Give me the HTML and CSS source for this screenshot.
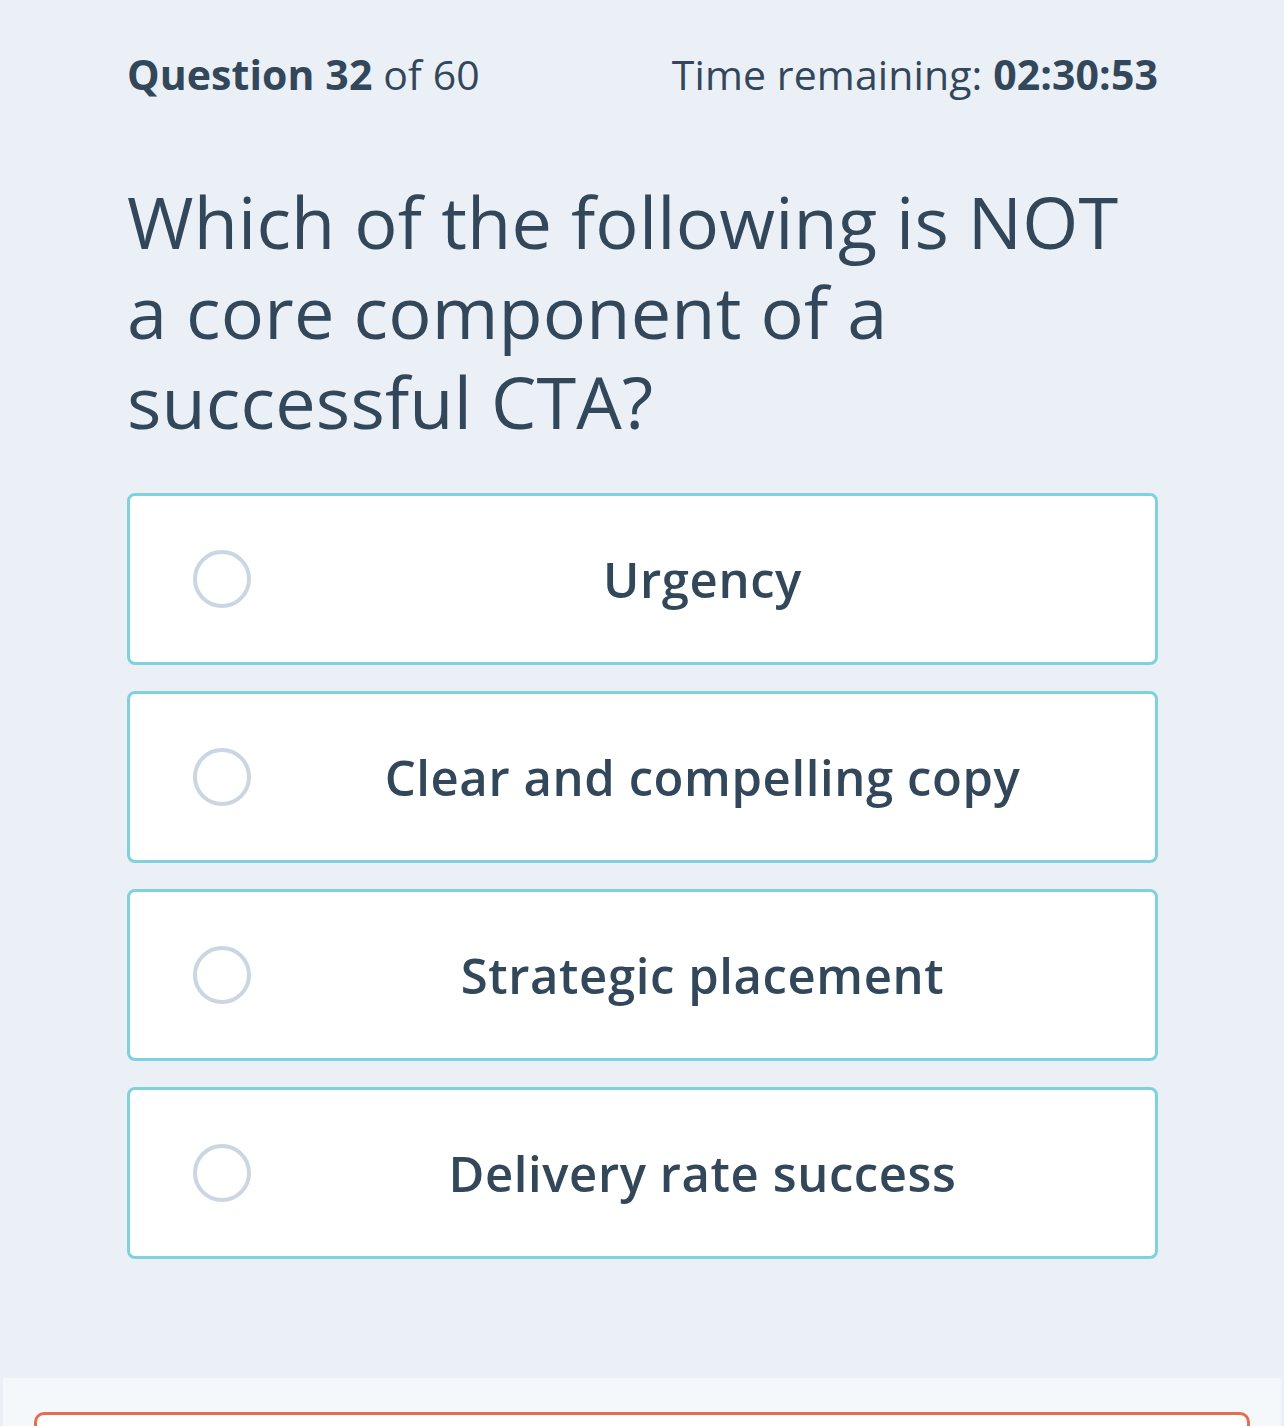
FILE: index.html
```html
<!DOCTYPE html>
<html lang="en">
<head>
<meta charset="utf-8">
<title>Quiz</title>
<link rel="stylesheet" href="styles.css">
</head>
<body>
<main class="quiz">
  <header class="quiz-header">
    <div class="progress"><strong>Question 32</strong> of 60</div>
    <div class="timer">Time remaining: <strong>02:30:53</strong></div>
  </header>
  <h1 class="question">Which of the following is NOT a core component of a successful CTA?</h1>
  <ul class="options">
    <li class="option"><span class="radio"></span><span class="label">Urgency</span></li>
    <li class="option"><span class="radio"></span><span class="label">Clear and compelling copy</span></li>
    <li class="option"><span class="radio"></span><span class="label">Strategic placement</span></li>
    <li class="option"><span class="radio"></span><span class="label">Delivery rate success</span></li>
  </ul>
</main>
<footer class="footer">
  <button class="footer-btn" type="button"></button>
</footer>
</body>
</html>
```
FILE: styles.css
```css
* { box-sizing: border-box; }
html, body { margin: 0; padding: 0; }
body {
  background: #eaf0f6;
  color: #33475b;
  font-family: "Open Sans", "Lato", sans-serif;
  height: 1426px;
  overflow: hidden;
}
.quiz {
  width: 1031px;
  margin-left: 127px;
  padding-top: 48px;
}
.quiz-header {
  display: flex;
  justify-content: space-between;
  align-items: baseline;
  font-size: 41px;
  line-height: 52px;
  font-weight: 400;
  letter-spacing: 0.1px;
}
.quiz-header strong { font-weight: 700; }
.question {
  margin: 76px 0 0;
  font-size: 72px;
  line-height: 90px;
  font-weight: 400;
  letter-spacing: 0.2px;
}
.options {
  list-style: none;
  margin: 47px 0 0;
  padding: 0;
  display: flex;
  flex-direction: column;
  gap: 26px;
}
.option {
  height: 172px;
  background: #fff;
  border: 3px solid #7fd1de;
  border-radius: 8px;
  display: flex;
  align-items: center;
  padding-left: 63px;
  padding-right: 1px;
}
.radio {
  flex: none;
  width: 58px;
  height: 58px;
  border: 4px solid #cbd6e2;
  border-radius: 50%;
}
.label {
  flex: 1;
  text-align: center;
  font-size: 49px;
  font-weight: 600;
  letter-spacing: 0.6px;
}
.footer {
  margin: 119px 3px 0;
  background: #f5f8fa;
  padding: 34px 31px 0;
  height: 100px;
}
.footer-btn {
  display: block;
  width: 100%;
  height: 80px;
  background: #fff;
  border: 3px solid #e66e50;
  border-radius: 10px;
}
```
